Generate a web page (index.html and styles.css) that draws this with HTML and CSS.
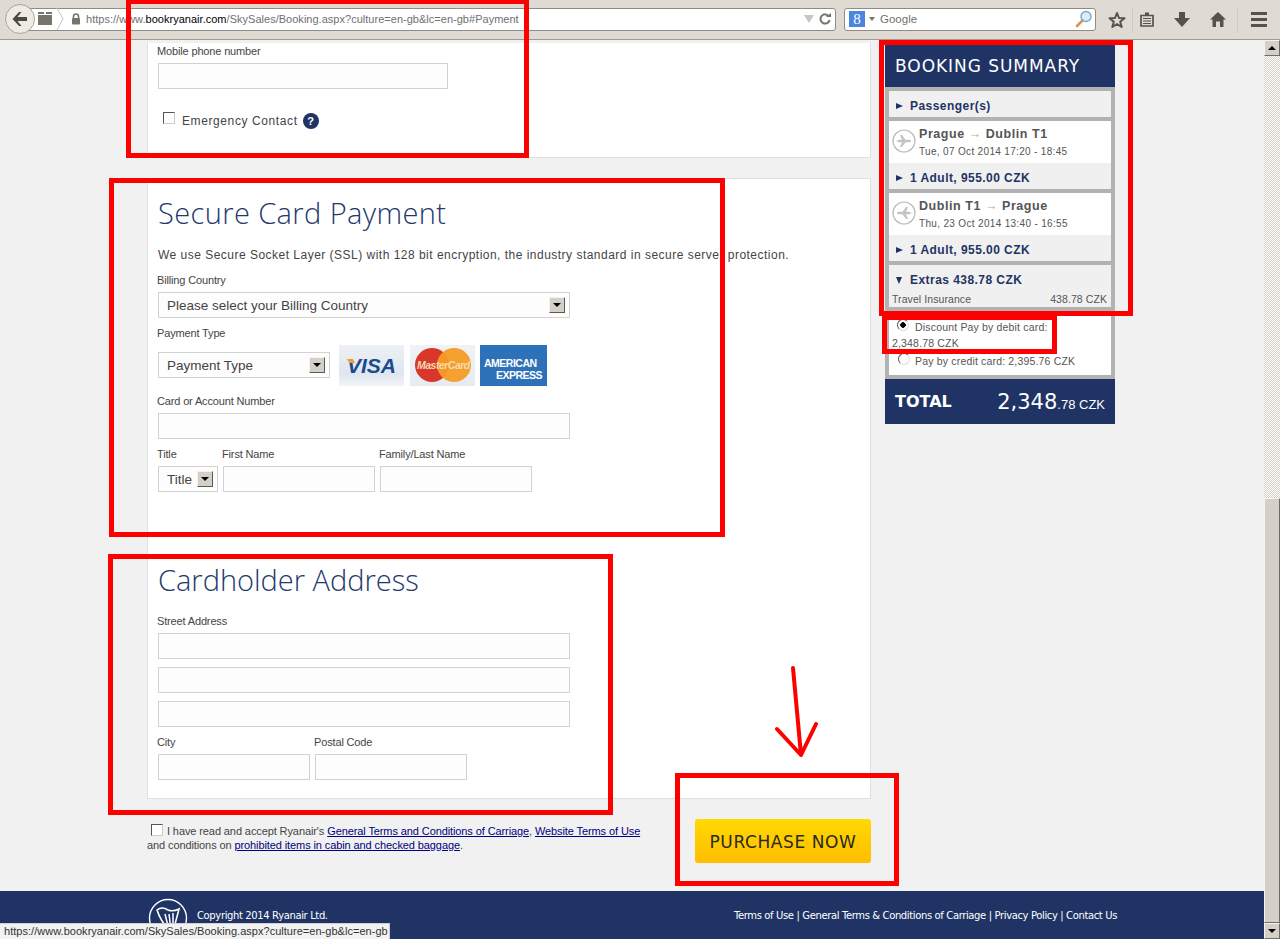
FILE: index.html
```html
<!DOCTYPE html>
<html lang="en">
<head>
    <meta charset="UTF-8">
    <title>Ryanair Booking</title>
    <link rel="stylesheet" href="styles.css">
</head>
<body>
    <div class="toolbar">
        <div class="back-btn">
            <svg width="18" height="16" viewBox="0 0 18 16"><path d="M8 1 L1.5 8 L8 15 L10.5 15 L6.5 10 H16 V6 H6.5 L10.5 1 Z" fill="#4c4a44"/></svg>
        </div>
        <div class="url-bar">
            <svg class="tabs-icon" width="16" height="14" viewBox="0 0 16 14"><path d="M1 0h6v2H1zM9 0h6v2H9zM1 3h14v10H1z" fill="#77746c"/></svg>
            <svg class="url-chevron" width="8" height="22" viewBox="0 0 8 22"><path d="M1 0 L7 11 L1 22" fill="none" stroke="#c4c4c4"/></svg>
            <svg class="lock-icon" width="10" height="12" viewBox="0 0 10 12"><path d="M2.5 5V3.5a2.5 2.5 0 0 1 5 0V5" fill="none" stroke="#77746c" stroke-width="1.6"/><rect x="1" y="5" width="8" height="6.5" rx="1" fill="#77746c"/></svg>
            <span class="url-text">https://www.<b>bookryanair.com</b>/SkySales/Booking.aspx?culture=en-gb&amp;lc=en-gb#Payment</span>
            <svg class="url-drop" width="10" height="8" viewBox="0 0 10 8"><path d="M0 0h10L5 8z" fill="#c6c6c6"/></svg>
            <svg class="reload" width="12" height="12" viewBox="0 0 12 12"><path d="M10 3.5A4.6 4.6 0 1 0 10.6 7" fill="none" stroke="#77746c" stroke-width="2"/><path d="M7 4h5V0z" fill="#77746c"/></svg>
        </div>
        <div class="search-bar">
            <span class="g-icon">8</span>
            <svg width="6" height="4" viewBox="0 0 6 4"><path d="M0 0h6L3 4z" fill="#77746c"/></svg>
            <span class="search-text">Google</span>
            <svg class="search-glass" width="18" height="18" viewBox="0 0 18 18"><circle cx="11" cy="6.5" r="5" fill="#d8ecfa" stroke="#7aa9cc" stroke-width="1.4"/><path d="M7.5 10.5 L2 16" stroke="#c99a5a" stroke-width="2.6" stroke-linecap="round"/></svg>
        </div>
        <div class="tool-icons">
            <svg class="ti-star" width="18" height="18" viewBox="0 0 18 18"><path d="M9 2 L11 7 L16.5 7.3 L12.2 10.8 L13.7 16 L9 13 L4.3 16 L5.8 10.8 L1.5 7.3 L7 7 Z" fill="none" stroke="#55534c" stroke-width="2" stroke-linejoin="round"/></svg>
            <i class="tool-sep ti-sep1"></i>
            <svg class="ti-list" width="14" height="15" viewBox="0 0 14 15"><path d="M1 3.500h12v10.500H1z" fill="none" stroke="#55534c" stroke-width="1.700"/><path d="M5 0.500h4v3H5z" fill="#55534c"/><path d="M3 6.500h8M3 9h8M3 11.500h8" fill="none" stroke="#55534c" stroke-width="1.200"/></svg>
            <svg class="ti-down" width="16" height="15" viewBox="0 0 16 15"><path d="M5 0h6v6h5l-8 9-8-9h5z" fill="#55534c"/></svg>
            <svg class="ti-home" width="16" height="15" viewBox="0 0 16 15"><path d="M8 0 L16 7.500 H13.500 V15 H10 V9.500 H6 V15 H2.500 V7.500 H0 Z" fill="#55534c"/></svg>
            <i class="tool-sep ti-sep2"></i>
            <span class="menu-icon"><i></i><i></i><i></i></span>
        </div>
    </div>

    <div class="viewport">
        <div class="page">
            <div class="content">
                <div class="main-col">
                    <div class="card card-clipped">
                        <label class="field-label">Mobile phone number</label>
                        <input type="text" class="txt txt-phone">
                        <div class="emergency-row">
                            <input type="checkbox" class="check">
                            <span class="emergency-text">Emergency Contact</span>
                            <span class="help-icon">?</span>
                        </div>
                    </div>

                    <div class="card card-payment">
                        <h2>Secure Card Payment</h2>
                        <p class="secure-note">We use Secure Socket Layer (SSL) with 128 bit encryption, the industry standard in secure server protection.</p>
                        <label class="field-label">Billing Country</label>
                        <div class="select select-full">Please select your Billing Country<span class="select-arrow"></span></div>
                        <label class="field-label">Payment Type</label>
                        <div class="payment-row">
                            <div class="select select-type">Payment Type<span class="select-arrow"></span></div>
                            <div class="logo logo-visa"><i class="visa-tick"></i>VISA</div>
                            <div class="logo logo-mc"><i class="mc-red"></i><i class="mc-orange"></i><span>MasterCard</span></div>
                            <div class="logo logo-amex">AMERICAN<br><span>EXPRESS</span></div>
                        </div>
                        <label class="field-label">Card or Account Number</label>
                        <input type="text" class="txt txt-full">
                        <div class="name-row">
                            <div class="name-col">
                                <label class="field-label">Title</label>
                                <div class="select select-title">Title<span class="select-arrow"></span></div>
                            </div>
                            <div class="name-col">
                                <label class="field-label">First Name</label>
                                <input type="text" class="txt txt-name">
                            </div>
                            <div class="name-col">
                                <label class="field-label">Family/Last Name</label>
                                <input type="text" class="txt txt-name">
                            </div>
                        </div>

                        <h2 class="address-head">Cardholder Address</h2>
                        <label class="field-label">Street Address</label>
                        <input type="text" class="txt txt-full">
                        <input type="text" class="txt txt-full txt-next">
                        <input type="text" class="txt txt-full txt-next">
                        <div class="name-row">
                            <div class="name-col">
                                <label class="field-label">City</label>
                                <input type="text" class="txt txt-name">
                            </div>
                            <div class="name-col">
                                <label class="field-label">Postal Code</label>
                                <input type="text" class="txt txt-name">
                            </div>
                        </div>
                    </div>

                    <div class="purchase-row">
                        <div class="terms">
                            <input type="checkbox" class="check check-terms"> I have read and accept Ryanair's <a href="#">General Terms and Conditions of Carriage</a>, <a href="#">Website Terms of Use</a><br>
                            and conditions on <a href="#">prohibited items in cabin and checked baggage</a>.
                        </div>
                        <button class="purchase-btn">PURCHASE NOW</button>
                    </div>
                </div>

                <div class="summary">
                    <div class="summary-head">BOOKING SUMMARY</div>
                    <div class="summary-body">
                        <div class="sum-row"><i class="tri"></i>Passenger(s)</div>
                        <div class="flight">
                            <div class="flight-info">
                                <svg class="plane" width="24" height="24" viewBox="0 0 24 24"><circle cx="12" cy="12" r="11" fill="none" stroke="#bbb" stroke-width="1.2"/><path d="M4 12 L7 10.800 H10 L8 6 H10 L13.500 10.800 H18 Q20 12 18 13.200 H13.500 L10 18 H8 L10 13.200 H7 Z" fill="#c4c4c4"/></svg>
                                <div>
                                    <div class="route">Prague <span class="route-arrow">→</span> Dublin T1</div>
                                    <div class="flight-date">Tue, 07 Oct 2014 17:20 - 18:45</div>
                                </div>
                            </div>
                            <div class="sum-row"><i class="tri"></i>1 Adult, 955.00 CZK</div>
                        </div>
                        <div class="flight">
                            <div class="flight-info">
                                <svg class="plane" width="24" height="24" viewBox="0 0 24 24"><circle cx="12" cy="12" r="11" fill="none" stroke="#bbb" stroke-width="1.2"/><path d="M20 12 L17 10.800 H14 L16 6 H14 L10.500 10.800 H6 Q4 12 6 13.200 H10.500 L14 18 H16 L14 13.200 H17 Z" fill="#c4c4c4"/></svg>
                                <div>
                                    <div class="route">Dublin T1 <span class="route-arrow">→</span> Prague</div>
                                    <div class="flight-date">Thu, 23 Oct 2014 13:40 - 16:55</div>
                                </div>
                            </div>
                            <div class="sum-row"><i class="tri"></i>1 Adult, 955.00 CZK</div>
                        </div>
                        <div class="extras">
                            <div class="extras-head"><i class="tri tri-down"></i>Extras 438.78 CZK</div>
                            <div class="extras-line"><span>Travel Insurance</span><span>438.78 CZK</span></div>
                        </div>
                        <div class="pay-options">
                            <div class="pay-debit"><input type="radio" name="pay" class="radio" checked> Discount Pay by debit card:<br>2,348.78 CZK</div>
                            <div class="pay-credit"><input type="radio" name="pay" class="radio"> Pay by credit card: 2,395.76 CZK</div>
                        </div>
                    </div>
                    <div class="total">
                        <span class="total-label">TOTAL</span>
                        <span class="total-value">2,348<small>.78 CZK</small></span>
                    </div>
                </div>
            </div>

            <div class="footer">
                <svg class="footer-logo" width="40" height="40" viewBox="0 0 40 40"><circle cx="20" cy="20" r="18.500" fill="#1f3464" stroke="#fff" stroke-width="1.400"/><path d="M9 12 Q14 8 20 12 Q25 14 31 11 L26 30 H20 Q13 24 9 12 Z" fill="none" stroke="#fff" stroke-width="1.600"/><path d="M17 16 L20 28 M21 16 L22.500 28 M25 15 L25 27" stroke="#fff" stroke-width="1.500"/></svg>
                <span class="copyright">Copyright 2014 Ryanair Ltd.</span>
                <div class="footer-links">Terms of Use | General Terms &amp; Conditions of Carriage | Privacy Policy | Contact Us</div>
            </div>
        </div>

        <div class="scrollbar">
            <div class="scroll-btn"><i class="scroll-up"></i></div>
            <div class="scroll-track"></div>
            <div class="scroll-thumb"></div>
            <div class="scroll-btn"><i class="scroll-down"></i></div>
        </div>
    </div>

    <div class="status-bar">https://www.bookryanair.com/SkySales/Booking.aspx?culture=en-gb&amp;lc=en-gb</div>

    <!-- red markers drawn over the screenshot -->
    <div class="mark mark-phone"></div>
    <div class="mark mark-payment"></div>
    <div class="mark mark-address"></div>
    <div class="mark mark-summary"></div>
    <div class="mark mark-debit"></div>
    <div class="mark mark-purchase"></div>
    <svg class="mark-arrow" width="50" height="100" viewBox="0 0 50 100"><path d="M18 3 L26 90 M2 64 L26 90 L41 59" fill="none" stroke="#f00" stroke-width="4" stroke-linecap="round" stroke-linejoin="round"/></svg>
</body>
</html>
```

FILE: styles.css
```css
html, body {
    margin: 0;
    height: 939px;
    overflow: hidden;
}
body {
    position: relative;
    display: flex;
    flex-direction: column;
    font-family: "Liberation Sans", Arial, sans-serif;
    font-size: 11px;
    color: #444;
    background: #f1f1f1;
}

/* browser chrome */
.toolbar {
    flex: none;
    display: flex;
    align-items: center;
    height: 39px;
    padding-left: 5px;
    background: #dfdbd3;
    border-bottom: 1px solid #9c9a94;
    box-sizing: content-box;
}
.back-btn {
    position: relative;
    z-index: 1;
    display: flex;
    align-items: center;
    justify-content: center;
    width: 28px;
    height: 28px;
    margin-top: -1px;
    border: 1px solid #a8a59e;
    border-radius: 50%;
    background: #eeebe5;
}
.url-bar {
    position: relative;
    display: flex;
    align-items: center;
    width: 809px;
    height: 21px;
    margin-left: -10px;
    margin-top: -1px;
    background: #fff;
    border: 1px solid #8e8c86;
    border-radius: 0 3px 3px 0;
}
.tabs-icon {
    margin-left: 11px;
}
.url-chevron {
    margin-left: 3px;
}
.lock-icon {
    margin-left: 7px;
}
.url-text {
    margin-left: 5px;
    font-size: 11px;
    letter-spacing: 0.02px;
    color: #707070;
    white-space: nowrap;
}
.url-text b {
    font-weight: normal;
    color: #000;
}
.url-drop {
    margin-left: auto;
}
.reload {
    margin: 0 4px 0 5px;
}
.search-bar {
    display: flex;
    align-items: center;
    width: 250px;
    height: 21px;
    margin-left: 8px;
    margin-top: -1px;
    background: #fff;
    border: 1px solid #8e8c86;
    border-radius: 3px;
}
.g-icon {
    width: 16px;
    height: 16px;
    margin: 0 4px;
    background: #4a86e0;
    color: #fff;
    font-family: "Liberation Serif", serif;
    font-size: 15px;
    line-height: 16px;
    text-align: center;
}
.search-text {
    margin-left: 5px;
    font-size: 11.5px;
    color: #707070;
}
.search-glass {
    margin-left: auto;
    margin-right: 2px;
}
.tool-icons {
    display: flex;
    align-items: center;
    flex: 1;
}
.ti-star { margin-left: 12px; }
.ti-sep1 { margin-left: 6px; }
.ti-list { margin-left: 7px; }
.ti-down { margin-left: 20px; }
.ti-home { margin-left: 20px; }
.ti-sep2 { margin-left: 11px; }
.tool-sep {
    width: 1px;
    height: 26px;
    background: #cdcac2;
}
.menu-icon {
    display: flex;
    flex-direction: column;
    gap: 3px;
    width: 16px;
    margin-left: 13px;
}
.menu-icon i {
    height: 3px;
    background: #55534c;
}

.viewport {
    flex: 1;
    display: flex;
    min-height: 0;
}
.page {
    flex: 1;
    display: flex;
    flex-direction: column;
    min-width: 0;
    overflow: hidden;
}
.scrollbar {
    flex: none;
    display: flex;
    flex-direction: column;
    width: 16px;
}
.scroll-btn {
    flex: none;
    display: flex;
    align-items: center;
    justify-content: center;
    height: 16px;
    box-sizing: border-box;
    background: #d4d0c8;
    border: 1px solid;
    border-color: #f4f3f0 #6e6c66 #6e6c66 #f4f3f0;
}
.scroll-up {
    border: 4px solid transparent;
    border-top: 0;
    border-bottom-color: #000;
}
.scroll-down {
    border: 4px solid transparent;
    border-bottom: 0;
    border-top-color: #000;
}
.scroll-track {
    flex: none;
    height: 442px;
    background: repeating-conic-gradient(#d4d0c8 0 25%, #fff 0 50%) 0 0 / 2px 2px;
}
.scroll-thumb {
    flex: 1;
    box-sizing: border-box;
    background: #d4d0c8;
    border: 1px solid;
    border-color: #f4f3f0 #6e6c66 #6e6c66 #f4f3f0;
}

/* page */
.content {
    flex: 1;
    display: flex;
    min-height: 0;
    padding-left: 147px;
}
.main-col {
    flex: none;
    width: 724px;
}
.card {
    box-sizing: border-box;
    padding: 0 0 0 10px;
    background: #fff;
    border: 1px solid #e0e0e0;
}
.card-clipped {
    margin-top: -4px;
    padding-bottom: 26px;
    border-top: 0;
}
.card-payment {
    margin-top: 20px;
    padding-top: 10px;
    padding-bottom: 18px;
}
h2 {
    margin: 0 0 9px;
    height: 48px;
    font-family: "Open Sans", sans-serif;
    font-size: 29px;
    font-weight: 300;
    line-height: 48px;
    letter-spacing: 0.4px;
    color: #24396b;
}
.address-head {
    margin-top: 64px;
    letter-spacing: 0;
}
.secure-note {
    margin: 10px 0 9px;
    font-size: 12px;
    line-height: 16px;
    letter-spacing: 0.485px;
    color: #444;
}
.field-label {
    display: block;
    height: 16px;
    margin: 7px 0 4px -1px;
    font-size: 11px;
    line-height: 16px;
    letter-spacing: -0.15px;
    color: #444;
    white-space: nowrap;
}
.txt {
    display: block;
    box-sizing: border-box;
    height: 26px;
    margin: 0;
    padding: 0;
    background: #fdfdfd;
    border: 1px solid #d2d2d2;
}
.txt-phone {
    width: 290px;
}
.txt-full {
    width: 412px;
}
.txt-next {
    margin-top: 8px;
}
.txt-name {
    width: 152px;
}
.select {
    position: relative;
    box-sizing: border-box;
    height: 26px;
    padding-left: 8px;
    background: #fdfdfd;
    border: 1px solid #d2d2d2;
    font-size: 13.5px;
    line-height: 25px;
    color: #444;
    white-space: nowrap;
}
.select-full {
    width: 412px;
}
.select-type {
    width: 172px;
    margin-bottom: 2px;
}
.select-title {
    width: 60px;
}
.select-arrow {
    position: absolute;
    top: 4px;
    right: 4px;
    width: 16px;
    height: 16px;
    box-sizing: border-box;
    background: #d4d0c8;
    border: 1px solid;
    border-color: #f4f3f0 #5c5a55 #5c5a55 #f4f3f0;
}
.select-arrow::after {
    content: "";
    position: absolute;
    top: 5px;
    left: 3px;
    border: 4px solid transparent;
    border-bottom: 0;
    border-top-color: #000;
}
.payment-row {
    display: flex;
    align-items: center;
    height: 41px;
}
.logo {
    position: relative;
    box-sizing: border-box;
    flex: none;
    height: 41px;
    overflow: hidden;
}
.logo-visa {
    width: 65px;
    margin-left: 9px;
    background: linear-gradient(#eef1f6, #dfe6ef 70%, #f2f4f8);
    color: #1a4a8f;
    font-size: 21px;
    font-weight: bold;
    font-style: italic;
    line-height: 41px;
    text-align: center;
}
.visa-tick {
    position: absolute;
    left: 9px;
    top: 14px;
    width: 6px;
    height: 4px;
    background: #e9a23b;
    transform: skewX(30deg);
}
.logo-mc {
    width: 65px;
    margin-left: 6px;
    background: linear-gradient(#f0f2f6, #e6ebf2);
}
.mc-red, .mc-orange {
    position: absolute;
    top: 3px;
    width: 34px;
    height: 34px;
    border-radius: 50%;
}
.mc-red {
    left: 5px;
    background: #d8372a;
}
.mc-orange {
    left: 27px;
    background: #f59c24;
    opacity: 0.95;
}
.logo-mc span {
    position: absolute;
    left: 7px;
    top: 14px;
    color: #fbd9b0;
    font-size: 10.5px;
    font-weight: bold;
    font-style: italic;
    letter-spacing: -0.5px;
}
.logo-amex {
    width: 67px;
    margin-left: 5px;
    padding: 12px 0 0 4px;
    background: #2d71b8;
    color: #fff;
    font-size: 10.5px;
    font-weight: bold;
    line-height: 12px;
    letter-spacing: -0.5px;
}
.logo-amex span {
    margin-left: 12px;
}
.name-row {
    display: flex;
    gap: 5px;
}

/* terms and purchase */
.purchase-row {
    display: flex;
    justify-content: space-between;
    padding-top: 20px;
}
.terms {
    margin-top: 5px;
    font-size: 11px;
    line-height: 14px;
    letter-spacing: -0.1px;
    color: #444;
    white-space: nowrap;
}
.terms a {
    color: #000080;
}
.check {
    box-sizing: border-box;
    width: 12px;
    height: 12px;
    margin: 0;
    appearance: none;
    background: #fff;
    border: 1px solid;
    border-color: #555 #ccc #ccc #555;
}
.check-terms {
    margin: -4px 1px 0 4px;
    vertical-align: middle;
}
.purchase-btn {
    width: 176px;
    height: 44px;
    padding: 2px 0 0;
    background: linear-gradient(#ffd900, #ffbd00);
    border: 0;
    border-radius: 3px;
    color: #2a2a20;
    font-family: "DejaVu Sans", sans-serif;
    font-size: 17px;
    letter-spacing: 0.6px;
}
.emergency-row {
    display: flex;
    align-items: center;
    height: 20px;
    margin-top: 22px;
    padding-left: 5px;
}
.emergency-text {
    margin-left: 7px;
    font-size: 12px;
    letter-spacing: 0.6px;
    color: #444;
}
.emergency-row .check {
    margin-top: -7px;
}
.help-icon {
    width: 16px;
    height: 16px;
    margin-left: 5px;
    border-radius: 50%;
    background: #1f3464;
    color: #fff;
    font-size: 11px;
    font-weight: bold;
    line-height: 16px;
    text-align: center;
}

/* summary */
.summary {
    flex: none;
    width: 230px;
    margin: 5px 0 0 14px;
}
.summary-head {
    height: 42px;
    padding-left: 10px;
    background: #1f3464;
    color: #fff;
    font-family: "DejaVu Sans", sans-serif;
    font-size: 17px;
    line-height: 43px;
    letter-spacing: 0.95px;
    box-sizing: border-box;
}
.summary-body {
    display: flex;
    flex-direction: column;
    gap: 4px;
    padding: 4px;
    background: #b2b2b2;
}
.sum-row {
    display: flex;
    align-items: center;
    height: 26px;
    box-sizing: border-box;
    padding: 4px 0 0 7px;
    background: #f0f0f0;
    color: #1f3464;
    font-size: 12px;
    font-weight: bold;
    letter-spacing: 0.45px;
}
.tri {
    flex: none;
    width: 0;
    height: 0;
    margin-right: 7px;
    border: 3.500px solid transparent;
    border-left: 7px solid #1f3464;
    border-right: 0;
}
.tri-down {
    margin-right: 8px;
    border: 3.500px solid transparent;
    border-top: 7px solid #1f3464;
    border-bottom: 0;
}
.flight-info {
    display: flex;
    height: 42px;
    box-sizing: border-box;
    padding: 6px 0 0 3px;
    background: #fff;
}
.plane {
    flex: none;
    margin: 2px 3px 0 0;
}
.route {
    font-size: 12.5px;
    font-weight: bold;
    line-height: 14px;
    letter-spacing: 0.55px;
    color: #555;
}
.route-arrow {
    font-weight: normal;
    color: #aaa;
}
.flight-date {
    margin-top: 5px;
    font-size: 10px;
    line-height: 12px;
    letter-spacing: 0.33px;
    color: #555;
}
.extras {
    height: 42px;
    box-sizing: border-box;
    background: #f0f0f0;
}
.extras-head {
    display: flex;
    align-items: center;
    height: 28px;
    padding: 2px 0 0 7px;
    box-sizing: border-box;
    color: #1f3464;
    font-size: 12px;
    font-weight: bold;
    letter-spacing: 0.45px;
}
.extras-line {
    display: flex;
    justify-content: space-between;
    padding: 0 4px 0 3px;
    font-size: 10.5px;
    line-height: 12px;
    letter-spacing: 0.08px;
    color: #555;
}
.pay-options {
    height: 64px;
    box-sizing: border-box;
    background: #fff;
    font-size: 10.5px;
    letter-spacing: 0.17px;
    color: #555;
}
.pay-debit {
    padding: 8px 0 0 3px;
    line-height: 16px;
}
.pay-credit {
    margin-top: 2px;
    padding-left: 9px;
    line-height: 14px;
}
.radio {
    box-sizing: border-box;
    width: 12px;
    height: 12px;
    margin: 0 2px 0 0;
    appearance: none;
    vertical-align: 0;
    background: #fff;
    border: 1px solid;
    border-color: #555 #ddd #ddd #555;
    border-radius: 50%;
}
.radio:checked {
    background: radial-gradient(circle, #000 0 2.500px, #fff 3px);
}
.pay-debit .radio {
    margin: 0 3px 0 5px;
}
.total {
    display: flex;
    align-items: center;
    justify-content: space-between;
    height: 45px;
    padding: 0 10px;
    box-sizing: border-box;
    background: #1f3464;
    color: #fff;
}
.total-label {
    font-family: "DejaVu Sans", sans-serif;
    font-size: 16px;
    font-weight: bold;
}
.total-value {
    font-family: "DejaVu Sans", sans-serif;
    font-size: 21px;
}
.total-value small {
    font-family: "Liberation Sans", sans-serif;
    font-size: 13px;
}

/* footer */
.footer {
    flex: none;
    display: flex;
    align-items: center;
    height: 48px;
    padding: 0 147px 0 147px;
    background: #1f3464;
    color: #fff;
    font-family: "DejaVu Sans", sans-serif;
    font-size: 10px;
    letter-spacing: -0.37px;
}
.footer-logo {
    margin-top: 5px;
    margin-left: 1px;
}
.copyright {
    margin-left: 9px;
}
.footer-links {
    margin-left: auto;
}

/* overlays */
.status-bar {
    position: absolute;
    left: 0;
    bottom: 0;
    width: 390px;
    height: 16px;
    box-sizing: border-box;
    padding-left: 4px;
    background: #f2f2f2;
    border-top: 1px solid #d0d0d0;
    border-right: 1px solid #d0d0d0;
    font-size: 11px;
    line-height: 15px;
    letter-spacing: 0.03px;
    color: #333;
    white-space: nowrap;
}
.mark {
    position: absolute;
    box-sizing: border-box;
    border: 5px solid #f00;
}
.mark-phone { left: 126px; top: -1px; width: 403px; height: 159px; }
.mark-payment { left: 109px; top: 178px; width: 616px; height: 359px; }
.mark-address { left: 108px; top: 554px; width: 505px; height: 261px; }
.mark-summary { left: 879px; top: 40px; width: 254px; height: 276px; }
.mark-debit { left: 882px; top: 315px; width: 175px; height: 39px; }
.mark-purchase { left: 675px; top: 773px; width: 224px; height: 113px; }
.mark-arrow {
    position: absolute;
    left: 775px;
    top: 665px;
}
```
